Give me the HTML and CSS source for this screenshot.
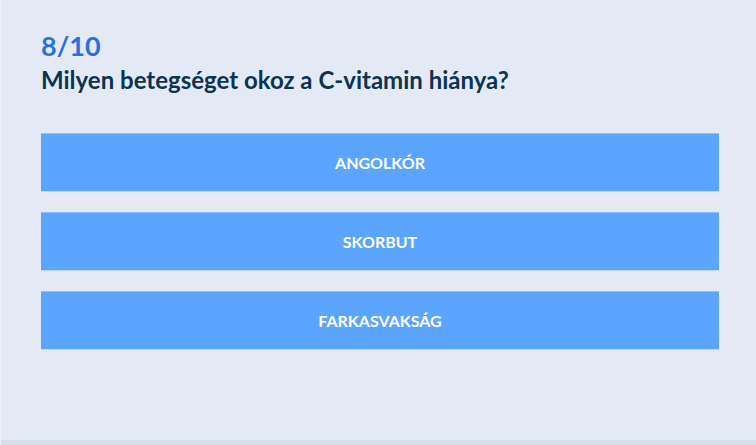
FILE: index.html
```html
<!DOCTYPE html>
<html lang="hu">
<head>
<meta charset="utf-8">
<title>Kvíz</title>
<link rel="stylesheet" href="styles.css">
</head>
<body>
<div class="page">
  <main class="quiz">
    <div class="counter">8/10</div>
    <h1 class="question">Milyen betegséget okoz a C-vitamin hiánya?</h1>
    <div class="answers">
      <button class="answer">ANGOLKÓR</button>
      <button class="answer">SKORBUT</button>
      <button class="answer">FARKASVAKSÁG</button>
    </div>
  </main>
  <div class="footer-strip"></div>
</div>
</body>
</html>
```

FILE: styles.css
```css
html, body {
  margin: 0;
  padding: 0;
  height: 100%;
}
body {
  background: #e3eaf5;
  font-family: Lato, "Noto Sans", sans-serif;
  overflow: hidden;
}
.page {
  height: 445px;
  display: flex;
  flex-direction: column;
  border-left: 1px solid #eef2f9;
  box-sizing: border-box;
}
.quiz {
  flex: 1;
  padding: 30px 37px 0 40px;
}
.counter {
  font-size: 27px;
  font-weight: 700;
  line-height: 32px;
  color: #2d70dc;
}
.question {
  margin: 3px 0 0;
  font-size: 24px;
  font-weight: 700;
  line-height: 29px;
  color: #0d3350;
}
.answers {
  margin-top: 39px;
  display: flex;
  flex-direction: column;
  gap: 20px;
}
.answer {
  height: 59px;
  border: 0;
  border-top: 1px solid #8cc0ff;
  border-bottom: 1px solid #b9d6fb;
  background: #5ba5ff;
  color: #ffffff;
  font-family: Lato, "Noto Sans", sans-serif;
  font-size: 16px;
  font-weight: 700;
  padding: 0;
  cursor: pointer;
}
.footer-strip {
  height: 5px;
  background: #d7dfec;
}
```
